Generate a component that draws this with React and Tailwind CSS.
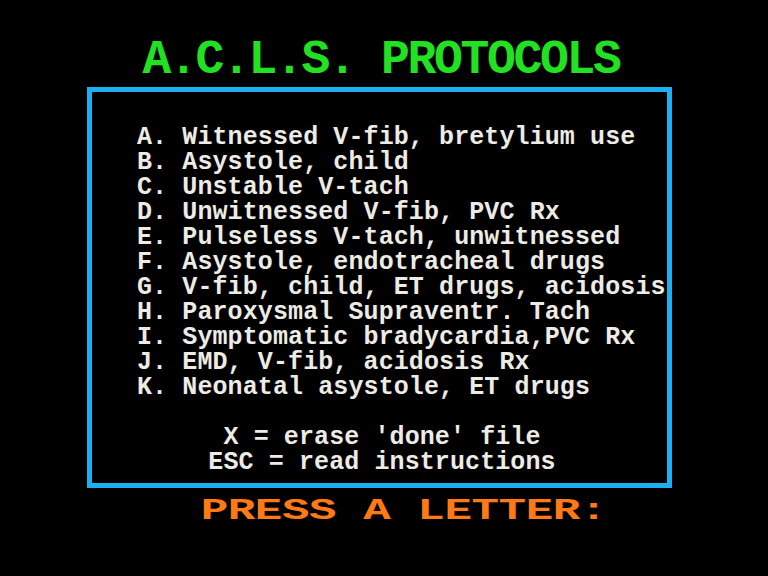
const items = [
  "A. Witnessed V-fib, bretylium use",
  "B. Asystole, child",
  "C. Unstable V-tach",
  "D. Unwitnessed V-fib, PVC Rx",
  "E. Pulseless V-tach, unwitnessed",
  "F. Asystole, endotracheal drugs",
  "G. V-fib, child, ET drugs, acidosis",
  "H. Paroxysmal Supraventr. Tach",
  "I. Symptomatic bradycardia,PVC Rx",
  "J. EMD, V-fib, acidosis Rx",
  "K. Neonatal asystole, ET drugs",
];

export default function App() {
  return (
    <div className="w-[768px] h-[576px] bg-black flex flex-col items-center font-['Liberation_Mono',monospace] font-bold overflow-hidden">
      <h1 className="mt-[34px] mr-[6px] h-[52px] text-[48px] leading-[52px] tracking-[-2.3px] text-[#22e022] whitespace-pre">
        A.C.L.S. PROTOCOLS
      </h1>
      <div className="mt-[1px] mr-[9px] w-[585px] h-[401px] border-[5px] border-[#1eaff0] pt-[33px] pl-[45px] text-[#ecebe4] text-[25px] leading-[25px] tracking-[0.1px]">
        <ul>
          {items.map((t) => (
            <li key={t} className="whitespace-pre">{t}</li>
          ))}
        </ul>
        <div className="mt-[25px] pr-[40px] text-center">
          <p className="whitespace-pre">X = erase 'done' file</p>
          <p className="whitespace-pre">ESC = read instructions</p>
        </div>
      </div>
      <p className="mt-[7px] ml-[39px] text-[30px] leading-[32px] tracking-[-0.3px] scale-x-[1.53] text-[#ff7a14] whitespace-pre">
        PRESS A LETTER:
      </p>
    </div>
  );
}
